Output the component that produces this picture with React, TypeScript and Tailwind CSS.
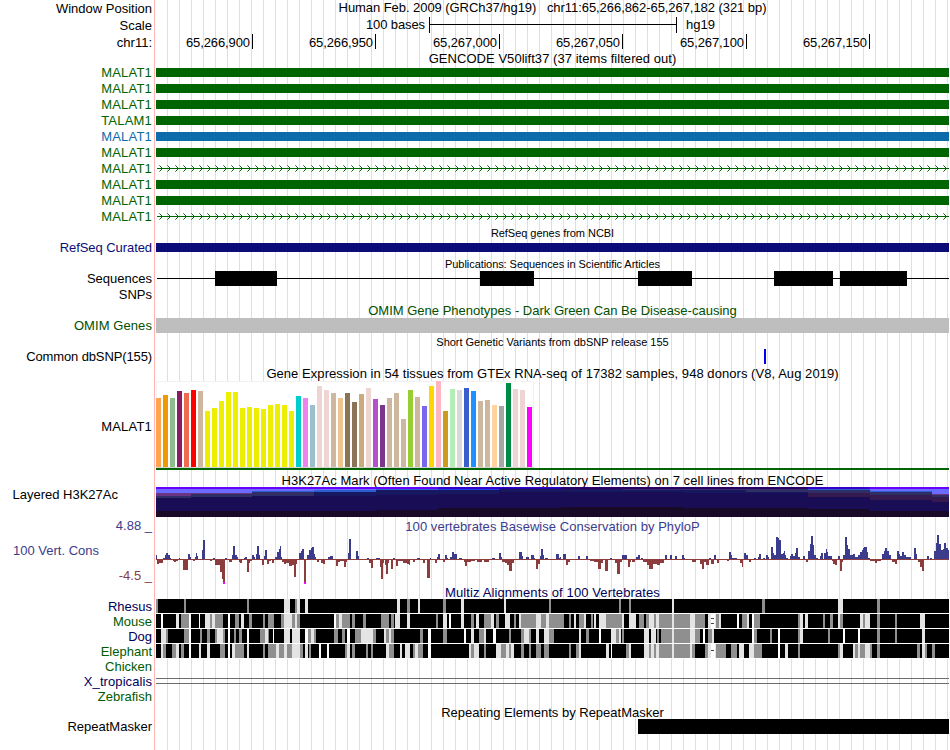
import React from "react";

const TRACK_WIDTH = 793;

const GREEN = "#006400";

/* ---------- small helpers ---------- */

type RowProps = {
  label?: string;
  labelClass?: string;
  height: string;
  children?: React.ReactNode;
};

function Row({ label, labelClass = "text-black", height, children }: RowProps) {
  return (
    <div className={`flex shrink-0 ${height}`}>
      <div className={`flex w-[152px] shrink-0 items-center justify-end whitespace-pre leading-none ${labelClass}`}>
        {label}
      </div>
      <div className="ml-[4px] w-[793px] shrink-0">{children}</div>
    </div>
  );
}

function Title({ text, height, className = "" }: { text: string; height: string; className?: string }) {
  return (
    <div className={`ml-[156px] flex w-[793px] shrink-0 items-center justify-center whitespace-pre leading-none ${height} ${className}`}>
      {text}
    </div>
  );
}

function Track({ height, children }: { height: number; children: React.ReactNode }) {
  return (
    <svg width={TRACK_WIDTH} height={height} shapeRendering="crispEdges" className="block">
      {children}
    </svg>
  );
}

/* ---------- gene models ---------- */

type Gene = { name: string; kind: "green" | "blue" | "intron" };

const genes: Gene[] = [
  { name: "MALAT1", kind: "green" },
  { name: "MALAT1", kind: "green" },
  { name: "MALAT1", kind: "green" },
  { name: "TALAM1", kind: "green" },
  { name: "MALAT1", kind: "blue" },
  { name: "MALAT1", kind: "green" },
  { name: "MALAT1", kind: "intron" },
  { name: "MALAT1", kind: "green" },
  { name: "MALAT1", kind: "green" },
  { name: "MALAT1", kind: "intron" },
];

function GeneRow({ gene }: { gene: Gene }) {
  return (
    <Row
      label={gene.name}
      labelClass={
        gene.kind === "blue"
          ? "pt-[1px] tracking-[0.2px] text-[#0c6cab]"
          : "pt-[1px] tracking-[0.2px] text-[#006400]"
      }
      height="h-[16px]"
    >
      {gene.kind === "intron" ? (
        <Track height={16}>
          <rect x={1} y={8} width={792} height={1} fill={GREEN} />
          {Array.from({ length: 99 }, (_, i) => (
            <g key={i} fill={GREEN}>
              <rect x={3 + i * 8} y={5} width={1} height={1} opacity={0.6} />
              <rect x={4 + i * 8} y={6} width={1} height={1} />
              <rect x={5 + i * 8} y={7} width={1} height={3} />
              <rect x={4 + i * 8} y={10} width={1} height={1} />
              <rect x={3 + i * 8} y={11} width={1} height={1} opacity={0.6} />
            </g>
          ))}
        </Track>
      ) : (
        <div className={`mt-[4px] h-[9px] ${gene.kind === "blue" ? "bg-[#0c6cab]" : "bg-[#006400]"}`} />
      )}
    </Row>
  );
}

/* ---------- GTEx expression ---------- */

const Y = "#eeee00";
const T = "#cdb79e";
const P = "#eed5d2";

const tissues: [number, string][] = [
  [69, "#ffa54f"], [72, "#ee9a00"], [69, "#8fbc8f"], [76, "#8b1c62"], [74, "#ee6a50"], [77, "#ff0000"], [76, T],
  [56, Y], [59, Y], [66, Y], [75, Y], [75, Y], [59, Y], [60, Y], [59, Y], [58, Y], [62, Y], [63, Y], [62, Y], [56, Y],
  [71, "#00cdcd"], [69, "#ee82ee"], [62, "#9ac0cd"], [81, P], [77, P], [74, T], [69, "#eec591"],
  [74, "#8b7355"], [65, "#8b7355"], [73, "#cdaa7d"], [79, P], [68, "#b452cd"], [62, "#7a378b"],
  [69, T], [74, T], [48, T], [77, "#9acd32"], [70, T], [61, "#7a67ee"], [81, "#ffd700"], [86, "#ffb6c1"],
  [56, "#cd9b1d"], [78, "#b4eeb4"], [77, "#d9d9d9"], [79, "#3a5fcd"], [76, "#1e90ff"], [66, T], [67, T],
  [62, "#ffd39b"], [61, "#a6a6a6"], [84, "#008b45"], [78, P], [77, P], [60, "#ff00ff"],
];

/* ---------- layered H3K27Ac ---------- */

const V = "#6600ff";
const PW = "#6b6bff";
const PU = "#6b3585";
const SL = "#2f2f66";
const BL = "#2b5fd0";
const ND = "#181860";
const NV = "#190e55";
const PL = "#351a50";
const BK = "#190b28";
const IN = "#3300cc";
const DV = "#2c0066";

/* each column: start x, then [bottom, colour] from top to bottom */
const layers: [number, [number, string][]][] = [
  [0, [[2, V], [6, PW], [9, PU], [11, SL], [24, NV], [30, BK]]],
  [35, [[2, V], [6, PW], [7, PU], [10, SL], [24, NV], [30, BK]]],
  [96, [[2, V], [4, PW], [5, BL], [9, SL], [24, NV], [30, BK]]],
  [158, [[2, V], [3, PW], [5, BL], [9, ND], [24, NV], [30, BK]]],
  [220, [[2, V], [3, BL], [8, ND], [23, NV], [30, BK]]],
  [282, [[2, IN], [3, "#1a40dd"], [7, ND], [21, NV], [30, BK]]],
  [343, [[1, IN], [2, "#2200aa"], [5, ND], [21, NV], [30, BK]]],
  [405, [[2, DV], [5, ND], [20, NV], [30, BK]]],
  [467, [[2, DV], [3, SL], [5, ND], [20, NV], [30, BK]]],
  [528, [[2, DV], [3, SL], [6, ND], [21, NV], [30, BK]]],
  [590, [[2, DV], [5, SL], [6, ND], [21, NV], [30, BK]]],
  [652, [[2, IN], [3, BL], [6, SL], [10, PL], [22, NV], [30, BK]]],
  [714, [[2, V], [4, PW], [5, BL], [8, SL], [13, PL], [24, NV], [30, BK]]],
  [776, [[2, V], [7, PW], [8, PU], [10, SL], [15, PL], [24, NV], [30, BK]]],
];

/* ---------- PhyloP conservation ---------- */

/* Three blocks; x and score are stored in thirds of a pixel. "start-end:score" */
const phylop: { origin: number; data: string }[] = [
  {
    origin: -6,
    data:
      "18-21:12 21-27:-15 27-39:-13 39-45:3 45-49:12 49-54:18 54-60:12 60-63:3 69-72:-6 72-78:-9 78-84:-5 86-90:3 99-114:-33 114-119:15 119-123:6 129-135:-6 135-138:6 138-142:18 142-145:9 156-159:27 159-165:57 180-186:-6 189-195:3 195-210:-17 210-217:-39 217-219:-60 219-225:-74 225-231:3 238-246:-9 246-249:12 249-255:39 255-260:12 260-264:6 266-270:-8 270-276:-12 282-286:3 286-291:6 291-297:-39 297-300:-12 300-306:-6 306-312:12 312-315:6 318-321:15 321-327:39 327-331:12 336-342:-18 342-345:9 345-351:27 351-357:-15 357-363:-6 366-372:-12 375-381:6 381-387:21 387-390:30 390-393:39 393-396:6 396-402:-9 402-408:-15 408-417:-12 417-426:-21 426-432:-18 432-438:-54 438-441:-15 447-453:18 453-456:24 456-462:30 462-468:-74 471-477:12 477-483:27 483-487:33 487-492:36 492-495:15 495-498:6 501-507:-9 513-519:-12 519-526:-14 534-540:6 540-549:9 558-564:-21 564-570:-9 570-582:-6 582-588:-24 588-591:-9 594-597:18 597-603:60 618-624:24 624-627:9 651-657:3 657-663:-12 663-669:-27 678-690:3 690-693:-24 693-699:-60 699-702:-12 705-708:-18 708-714:-45 714-717:-12 723-729:-30 729-735:3 738-744:-21 744-760:-5 760-771:-12 771-777:-15 777-780:-18 789-795:-9 804-810:3",
  },
  {
    origin: 259,
    data:
      "6-15:3 24-30:-12 36-45:-57 45-48:3 60-66:-12 66-69:6 69-74:15 85-90:-9 90-96:12 96-99:3 105-110:6 110-118:21 118-125:15 132-141:3 147-150:-9 150-156:-21 156-168:-9 168-180:-6 186-201:-9 207-222:-8 231-240:3 252-258:18 258-261:6 261-270:-9 270-276:-12 276-282:-18 282-291:-36 291-297:-12 312-320:21 320-324:9 333-342:6 348-356:12 356-361:3 363-366:-30 366-370:-30 370-375:-15 375-378:9 378-384:30 384-388:12 390-399:3 424-431:15 431-435:3 435-438:6 444-453:15 453-460:-18 460-465:-8 489-495:9 513-519:9 525-537:-6 537-549:-9 549-558:-30 558-564:-12 570-579:-36 585-591:3 600-606:-12 606-615:-45 615-620:-9 621-636:12 639-645:-24 645-648:-9 651-660:-9 663-669:6 669-675:12 678-684:3 684-696:-9 696-702:-18 702-714:-30 714-727:-15 727-735:-18 735-747:-12 749-756:12 765-771:12 780-785:9 800-807:12",
  },
  {
    origin: 524,
    data:
      "6-12:12 12-15:3 36-48:-8 60-66:-15 66-72:-30 72-78:-9 78-87:-18 87-93:3 93-102:-15 102-108:12 111-117:-12 141-147:-6 147-153:20 153-156:12 156-171:4 180-185:-12 185-189:-24 192-198:18 198-204:12 207-213:-9 222-228:3 234-237:6 237-243:15 249-255:3 258-264:12 264-267:6 273-279:36 279-283:18 283-288:12 288-294:66 294-297:63 297-303:57 303-309:15 309-312:18 312-316:24 316-319:12 319-324:3 330-333:9 333-338:15 338-345:9 345-348:18 348-354:33 354-360:6 369-375:9 378-384:-9 384-390:24 390-393:45 393-399:69 399-402:42 402-408:12 408-414:3 420-424:9 424-429:18 432-438:18 438-441:30 441-445:21 445-456:9 456-459:-6 459-465:-15 465-471:-18 474-480:9 480-486:-36 486-489:-9 489-495:12 495-501:66 501-504:42 504-510:30 510-520:12 520-525:15 525-533:6 533-540:12 540-546:21 546-549:27 549-552:33 552-561:36 561-564:21 564-570:3 570-585:-6 585-591:-12 591-603:-6 606-612:15 612-615:24 615-621:33 621-628:24 628-633:12 636-645:-9 645-651:-15 651-657:24 657-660:15 660-666:9 666-672:21 672-678:12 678-693:6 702-708:33 708-711:15 715-720:-9 720-726:-24 726-732:-36 741-747:9 750-756:3 762-768:24 768-771:48 771-777:72 777-783:45 783-789:27 789-792:30 792-798:48 798-804:33 804-807:27",
  },
];

function Conservation() {
  const base = 42;
  return (
    <Track height={68}>
      <rect x={0} y={base} width={TRACK_WIDTH} height={1} fill="#8c3c3c" />
      {phylop.flatMap(({ origin, data }) =>
        data.split(" ").map((item) => {
          const [range, score] = item.split(":");
          const [a, b] = range.split("-").map(Number);
          const x = Math.round(origin + a / 3);
          const w = Math.max(1, Math.round(origin + b / 3) - x);
          const h = Math.round(Number(score) / 3);
          return (
            <React.Fragment key={`${origin}-${item}`}>
              <rect x={x} y={h > 0 ? base - h : base} width={w} height={Math.abs(h)} fill={h > 0 ? "#3c3c8c" : "#8c3c3c"} />
              {h <= -25 && <rect x={x} y={base + 23} width={w} height={2} fill="#ff00ff" />}
            </React.Fragment>
          );
        }),
      )}
    </Track>
  );
}

/* ---------- Multiz alignments ---------- */

const shades: Record<string, string> = { g: "#8f8f8f", l: "#e4e4e4", w: "#ffffff" };

const species: { name: string; label: string; blocks: [string, string, string]; gaps: number[] }[] = [
  {
    name: "Rhesus",
    label: "text-[#00005a]",
    blocks: [
      "g18-24 g102-108 g291-297 l402-420 g435-441 l441-450 l465-474 l741-750 g771-780 l804-807",
      "l9-15 g84-93 l138-147 l267-273 g402-408 g612-618 g642-648 l771-777",
      "g246-255 l474-489 g591-600",
    ],
    gaps: [],
  },
  {
    name: "Mouse",
    label: "text-[#005a00]",
    blocks: [
      "w33-39 l78-87 g93-117 w117-123 w147-150 l165-180 g180-186 l186-195 g195-219 w234-240 g255-267 l273-282 g297-306 g339-345 g354-372 g393-402 l402-426 g426-435 l435-441 g441-450 w552-558 g558-567 l567-576 g576-600 g606-615 g639-648 g693-717 g723-732 l735-750 l771-780",
      "g63-69 l84-96 w102-108 l138-147 g168-177 l183-192 g207-228 l228-237 g243-252 l270-285 g297-303 l312-318 g318-363 l363-378 g378-393 l393-402 g402-447 g462-468 l477-483 g492-507 l507-513 g528-534 l537-543 l552-573 g573-612 g612-621 l621-627 l642-663 g672-687 g693-702 l702-717 g717-723 l723-732 g732-771 l771-777 g777-810",
      "g0-30 l30-45 g45-75 l84-93 w93-105 l105-108 g108-117 l117-123 w171-177 g186-201 l201-207 w216-222 g222-240 g354-360 l360-369 l375-384 g429-435 g450-459 l474-480 g480-489 l540-549 g549-555 l555-570 g591-600 g645-651 l720-735",
    ],
    gaps: [4, 9],
  },
  {
    name: "Dog",
    label: "text-[#00005a]",
    blocks: [
      "l33-48 g48-54 g102-117 w117-123 g150-156 g171-180 g195-201 l201-219 g219-225 w234-240 g252-258 g267-276 w291-297 g330-345 l345-354 g354-358 w369-372 l402-420 l426-450 w465-474 g474-483 l483-492 g492-498 g552-564 g576-585 w591-600 g615-633 l633-669 g669-678 l702-708 g708-717 l717-723 g723-732",
      "g15-24 w39-48 g84-96 w147-153 l168-177 g192-207 l207-213 w234-243 g282-288 g318-327 l327-342 g342-348 l363-372 g387-393 l387-402 g402-417 l492-498 g513-522 w552-558 l588-603 g603-612 l612-618 g621-627 l687-702 l708-723 g726-732 g738-771 l771-777 g777-810",
      "g0-30 l30-45 g45-60 w69-75 g84-96 l96-102 w216-222 g222-231 g270-276 w294-300 g354-360 l360-369 g444-450 w489-495 w534-540 g591-600 g645-651 l726-735",
    ],
    gaps: [],
  },
  {
    name: "Elephant",
    label: "text-[#005a00]",
    blocks: [
      "l33-39 g39-49 g67-78 l78-87 g93-102 w117-123 l147-153 l171-180 g210-225 w234-240 l246-255 g255-282 l291-297 g339-345 g354-378 l378-387 g387-402 l402-411 g411-426 l426-450 g450-459 l465-474 g477-483 w507-513 w531-537 g585-591 l591-600 g606-615 g648-654 g663-669 l708-717 g717-732 l750-756 l765-780 g789-795 l795-804",
      "l0-9 g9-24 w39-48 l162-168 g168-177 l177-192 g207-213 l243-258 g258-273 l273-282 g282-288 l288-297 g318-327 g342-348 g363-378 g387-402 g462-468 g483-492 l492-498 l573-582 w588-591 g633-642 l642-648 l687-702 g702-708 l708-717 g717-723 l723-732 g732-771 l771-777 g777-810",
      "g0-30 l30-36 g36-45 g75-84 l84-93 w93-105 l105-108 g108-138 g153-171 l177-192 l207-222 g222-246 w294-300 l315-324 g354-360 g474-480 l480-489 l519-525 g525-534 l534-540 g540-555 l555-570 g570-576 g591-600 g711-720 l726-735 g735-741 g756-765",
    ],
    gaps: [6],
  },
];

const blockOrigins = [-6, 259, 524];

function Alignment({ blocks, gaps }: { blocks: string[]; gaps: number[] }) {
  return (
    <Track height={15}>
      <rect x={0} y={0} width={TRACK_WIDTH} height={14} fill="#000" />
      <rect x={0} y={14} width={TRACK_WIDTH} height={1} fill="#fff" />
      {blocks.flatMap((block, b) =>
        block.split(" ").map((item) => {
          const [from, to] = item.slice(1).split("-").map(Number);
          const x = Math.round(blockOrigins[b] + from / 3);
          return (
            <rect
              key={`${b}${item}`}
              x={x}
              y={0}
              width={Math.round(blockOrigins[b] + to / 3) - x}
              height={14}
              fill={shades[item[0]]}
            />
          );
        }),
      )}
      {gaps.map((y) => (
        <rect key={y} x={555} y={y} width={3} height={1} fill="#444" />
      ))}
    </Track>
  );
}

/* ---------- page ---------- */

const ruler: { text: string; cell: string }[] = [
  { text: "65,266,900", cell: "w-[97px]" },
  { text: "65,266,950", cell: "w-[123px]" },
  { text: "65,267,000", cell: "w-[124px]" },
  { text: "65,267,050", cell: "w-[123px]" },
  { text: "65,267,100", cell: "w-[124px]" },
  { text: "65,267,150", cell: "w-[123px]" },
];

const publications: [number, number][] = [[59, 62], [324, 54], [482, 54], [618, 59], [684, 67]];

export default function App() {
  return (
    <div className="relative h-[750px] w-[950px] overflow-hidden bg-white font-['Liberation_Sans',Arial,sans-serif] text-[13px] text-black">
      <div className="absolute inset-y-0 left-[154px] w-[795px] border-l border-[#ffb4b4] bg-[repeating-linear-gradient(to_right,transparent_0px,transparent_11px,#dcdcfa_11px,#dcdcfa_12px)] bg-[position:1px_0]" />
      <div className="relative flex flex-col">
        <Row label="Window Position" labelClass="pb-[1px]" height="h-[17px]">
          <div className="flex h-[16px] items-center justify-center whitespace-pre pb-[1px] leading-none tracking-[-0.06px]">
            {"Human Feb. 2009 (GRCh37/hg19)   chr11:65,266,862-65,267,182 (321 bp)"}
          </div>
        </Row>
        <Row label="Scale" height="h-[17px]">
          <div className="flex h-[16px] items-center leading-none">
            <div className="w-[269px] pb-[1px] text-right tracking-[-0.1px]">100 bases</div>
            <div className="ml-[4px] flex h-[16px] w-[248px] items-center border-x border-black">
              <div className="mb-px h-px w-full bg-black" />
            </div>
            <div className="ml-[9px] pb-[1px]">hg19</div>
          </div>
        </Row>
        <Row label="chr11:" height="h-[17px]">
          <div className="flex">
            {ruler.map((r) => (
              <div
                key={r.text}
                className={`flex h-[15px] items-center justify-end border-r border-black pr-[2px] pt-[2px] leading-none tracking-[-0.1px] ${r.cell}`}
              >
                {r.text}
              </div>
            ))}
          </div>
        </Row>
        <Title text="GENCODE V50lift37 (37 items filtered out)" height="h-[13px] pt-[2px]" className="tracking-[0.05px]" />
        {genes.map((g, i) => (
          <GeneRow key={i} gene={g} />
        ))}

        <Title text="RefSeq genes from NCBI" height="h-[16px] pt-[2px]" className="text-[11px] tracking-[-0.04px]" />
        <Row label="RefSeq Curated" labelClass="pb-[1px] tracking-[-0.07px] text-[#0c0c78]" height="h-[16px]">
          <div className="mt-[3px] h-[9px] bg-[#0c0c78]" />
        </Row>

        <Title text="Publications: Sequences in Scientific Articles" height="h-[15px] pt-[2px]" className="text-[11px] tracking-[-0.06px]" />
        <Row label="Sequences" height="h-[15px]">
          <Track height={15}>
            <rect x={1} y={7} width={792} height={1} fill="#000" />
            {publications.map(([x, w]) => (
              <rect key={x} x={x} y={0} width={w} height={15} fill="#000" />
            ))}
          </Track>
        </Row>
        <Row label="SNPs" height="h-[16px]" />

        <Title text="OMIM Gene Phenotypes - Dark Green Can Be Disease-causing" height="h-[16px] pt-[1px]" className="text-[#005000]" />
        <Row label="OMIM Genes" labelClass="tracking-[0.08px] text-[#005000]" height="h-[15px]">
          <div className="h-[15px] bg-[#bebebe]" />
        </Row>

        <Title text="Short Genetic Variants from dbSNP release 155" height="h-[16px] pt-[2px]" className="text-[11px] tracking-[-0.02px]" />
        <Row label="Common dbSNP(155)" labelClass="tracking-[-0.12px]" height="h-[15px]">
          <div className="ml-[608px] h-[15px] w-[2px] bg-[#0000f0]" />
        </Row>

        <Title
          text="Gene Expression in 54 tissues from GTEx RNA-seq of 17382 samples, 948 donors (V8, Aug 2019)"
          height="h-[17px] pt-[2px]"
          className="tracking-[0.055px]"
        />
        <Row label="MALAT1" labelClass="pt-[2px] tracking-[0.2px]" height="h-[89px]">
          <div className="flex h-[87px] w-[378px] items-end gap-[2px] border-b border-[#d3d3d3] bg-white shadow-[inset_1px_1px_#f2f2f2,inset_-1px_0_#f2f2f2]">
            {tissues.map(([h, color], i) => (
              <div key={i} className="w-[5px] shrink-0" style={{ height: h, backgroundColor: color }} />
            ))}
          </div>
          <div className="h-[2px] bg-[#006400]" />
        </Row>

        <Title
          text="H3K27Ac Mark (Often Found Near Active Regulatory Elements) on 7 cell lines from ENCODE"
          height="h-[17px] pt-[4px]"
          className="tracking-[0.05px]"
        />
        <Row label="Layered H3K27Ac" labelClass="pb-[16px] pr-[34px]" height="h-[30px]">
          <Track height={30}>
            {layers.map(([x, stops], i) => {
              const end = i + 1 < layers.length ? layers[i + 1][0] : TRACK_WIDTH;
              return stops.map(([bottom, color], j) => {
                const top = j === 0 ? 0 : stops[j - 1][0];
                return <rect key={`${x}-${bottom}`} x={x} y={top} width={end - x} height={bottom - top} fill={color} />;
              });
            })}
          </Track>
        </Row>

        <div className="flex h-[68px]">
          <div className="flex w-[152px] shrink-0 flex-col items-end whitespace-pre leading-none">
            <div className="mt-[2px] h-[25px] text-[#3c3c8c]">4.88 _</div>
            <div className="h-[25px] w-[139px] text-[#3c3c8c]">100 Vert. Cons</div>
            <div className="text-[#8c3c3c]">-4.5 _</div>
          </div>
          <div className="relative ml-[4px] w-[793px]">
            <div className="absolute inset-x-0 top-[3px] text-center leading-none tracking-[0.05px] text-[#3c3c8c]">
              100 vertebrates Basewise Conservation by PhyloP
            </div>
            <Conservation />
          </div>
        </div>

        <Title text="Multiz Alignments of 100 Vertebrates" height="h-[14px]" className="tracking-[0.11px] text-[#00005a]" />
        {species.map((s) => (
          <Row key={s.name} label={s.name} labelClass={s.label} height="h-[15px]">
            <Alignment blocks={s.blocks} gaps={s.gaps} />
          </Row>
        ))}
        <Row label="Chicken" labelClass="text-[#005a00]" height="h-[15px]" />
        <Row label="X_tropicalis" labelClass="tracking-[0.08px] text-[#00005a]" height="h-[15px]">
          <div className="flex h-[10px] flex-col justify-end">
            <div className="h-[6px] border-y border-[#6e6e6e]" />
          </div>
        </Row>
        <Row label="Zebrafish" labelClass="text-[#005a00]" height="h-[15px]" />

        <Title text="Repeating Elements by RepeatMasker" height="h-[15px] pt-[2px]" />
        <Row label="RepeatMasker" height="h-[15px]">
          <div className="ml-[482px] h-[15px] bg-black" />
        </Row>
      </div>
    </div>
  );
}
